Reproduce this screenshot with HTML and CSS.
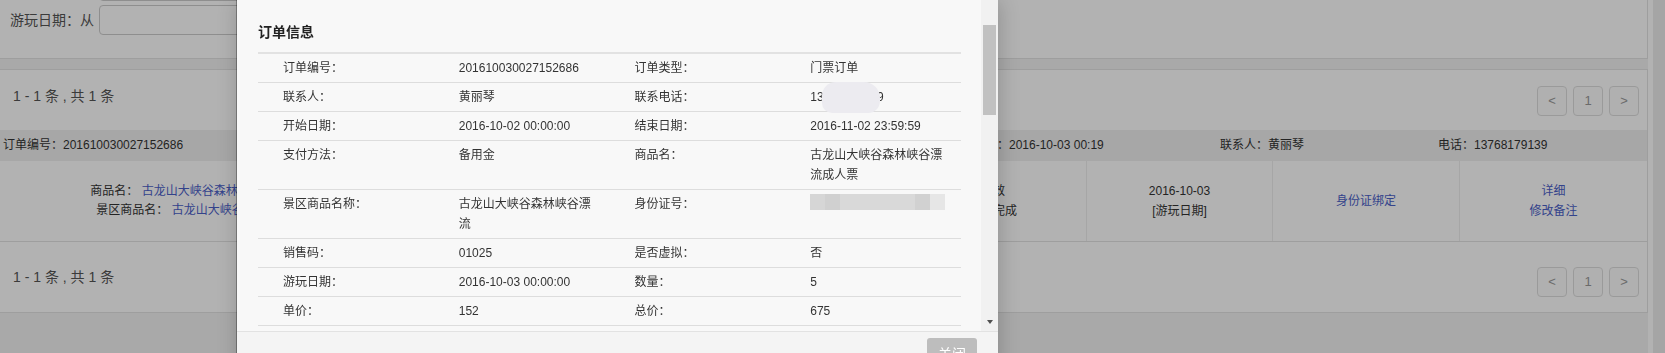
FILE: index.html
```html
<!DOCTYPE html>
<html lang="zh-CN">
<head>
  <meta charset="UTF-8" />
  <meta name="viewport" content="width=device-width, initial-scale=1.0"/>
  <title>订单管理</title>
  <link rel="stylesheet" href="styles.css">
</head>
<body>
  <div class="page">
    <div class="main">
      <div class="panel search-panel">
        <div class="search-row">
          <label>下单日期：从</label>
          <input class="field" type="text">
        </div>
        <div class="search-row">
          <label>游玩日期：从</label>
          <input class="field" type="text">
        </div>
      </div>

      <div class="panel list-panel">
        <div class="pager">
          <span class="pager-count">1 - 1 条 , 共 1 条</span>
          <div class="pager-btns">
            <a class="pg-btn">&lt;</a>
            <a class="pg-btn">1</a>
            <a class="pg-btn">&gt;</a>
          </div>
        </div>

        <div class="order">
          <div class="order-head">
            <span>订单编号：201610030027152686</span>
            <span>下单时间：2016-10-03 00:19</span>
            <span>联系人：黄丽琴</span>
            <span>电话：13768179139</span>
          </div>
          <div class="order-body">
            <div class="cell cell-goods">
              <div>商品名： <a href="#">古龙山大峡谷森林峡谷漂流成人票</a></div>
              <div>景区商品名： <a href="#">古龙山大峡谷森林峡谷漂流</a></div>
            </div>
            <div class="cell">152.00<br>x 5</div>
            <div class="cell">675.00</div>
            <div class="cell">有效<br>交易完成</div>
            <div class="cell">2016-10-03<br>[游玩日期]</div>
            <div class="cell"><a href="#">身份证绑定</a></div>
            <div class="cell"><a href="#">详细</a><a href="#">修改备注</a></div>
          </div>
        </div>

        <div class="pager pager-bottom">
          <span class="pager-count">1 - 1 条 , 共 1 条</span>
          <div class="pager-btns">
            <a class="pg-btn">&lt;</a>
            <a class="pg-btn">1</a>
            <a class="pg-btn">&gt;</a>
          </div>
        </div>
      </div>
    </div>
    <div class="page-scroll"></div>
  </div>

  <div class="shade"></div>

  <div class="layer">
    <div class="layer-main">
      <div class="layer-content">
        <h3 class="info-title">订单信息</h3>
        <table class="info-table">
          <tr><td>订单编号：</td><td>201610030027152686</td><td>订单类型：</td><td>门票订单</td></tr>
          <tr><td>联系人：</td><td>黄丽琴</td><td>联系电话：</td><td><span class="masked">13768179139<i class="blot"></i></span></td></tr>
          <tr><td>开始日期：</td><td>2016-10-02 00:00:00</td><td>结束日期：</td><td>2016-11-02 23:59:59</td></tr>
          <tr><td>支付方法：</td><td>备用金</td><td>商品名：</td><td>古龙山大峡谷森林峡谷漂流成人票</td></tr>
          <tr><td>景区商品名称：</td><td>古龙山大峡谷森林峡谷漂流</td><td>身份证号：</td><td><span class="id-mask"></span></td></tr>
          <tr><td>销售码：</td><td>01025</td><td>是否虚拟：</td><td>否</td></tr>
          <tr><td>游玩日期：</td><td>2016-10-03 00:00:00</td><td>数量：</td><td>5</td></tr>
          <tr><td>单价：</td><td>152</td><td>总价：</td><td>675</td></tr>
          <tr><td>订单状态：</td><td>有效</td><td>支付状态：</td><td>已支付</td></tr>
        </table>
      </div>
      <div class="layer-scrollbar">
        <div class="thumb"></div>
        <div class="arrow-down"></div>
      </div>
    </div>
    <div class="layer-foot">
      <a class="btn-close">关闭</a>
    </div>
  </div>
</body>
</html>
```

FILE: styles.css
```css
* {
  box-sizing: border-box;
}

body {
  margin: 0;
  font-family: "Liberation Sans", "Noto Sans CJK JP", "Noto Sans CJK SC", sans-serif;
  font-size: 12px;
  color: #333;
  background: #fff;
  overflow: hidden;
}

a {
  color: #4a60c8;
  text-decoration: none;
}

.page {
  display: flex;
  min-height: 100vh;
}

.main {
  width: 1648px;
  background: #f3f3f3;
}

.page-scroll {
  width: 12px;
  margin-left: 5px;
  background: #ededed;
}

.panel {
  background: #fff;
  border: 1px solid #e3e3e3;
  border-left: 0;
}

/* search form */
.search-panel {
  margin-top: -30px;
  padding-bottom: 23px;
}

.search-row {
  display: flex;
  align-items: center;
  gap: 5px;
  height: 30px;
  padding-left: 10px;
}

.search-row + .search-row {
  margin-top: 4px;
}

.search-row label {
  width: 84px;
  font-size: 14px;
  line-height: 30px;
  color: #555;
  white-space: nowrap;
}

.field {
  width: 220px;
  height: 30px;
  border: 1px solid #ccc;
  border-radius: 4px;
  background: #fff;
}

/* list */
.list-panel {
  margin-top: 10px;
}

.pager {
  display: flex;
  justify-content: space-between;
  align-items: flex-start;
  height: 60px;
  padding: 16px 8px 0 13px;
}

.pager-bottom {
  height: 70px;
  padding-top: 25px;
}

.pager-count {
  font-size: 14px;
  line-height: 20px;
  color: #555;
}

.pager-btns {
  display: flex;
  gap: 6px;
}

.pg-btn {
  width: 30px;
  height: 30px;
  border: 1px solid #ddd;
  border-radius: 4px;
  background: #fcfcfc;
  line-height: 28px;
  text-align: center;
  font-size: 13px;
  color: #999;
}

.order-head {
  display: grid;
  grid-template-columns: 946px 271px 218px auto;
  height: 31px;
  padding-left: 3px;
  line-height: 31px;
  background: #f0f0f0;
  white-space: nowrap;
}

.order-body {
  display: grid;
  grid-template-columns: 412px 300px 187px 187px 186px 187px 188px;
  height: 81px;
  border-bottom: 1px solid #e3e3e3;
}

.cell {
  display: flex;
  flex-direction: column;
  justify-content: center;
  align-items: center;
  border-left: 1px solid #eee;
  line-height: 20px;
  text-align: center;
}

.cell-goods {
  border-left: 0;
  line-height: 19px;
}

/* dialog */
.shade {
  position: fixed;
  inset: 0;
  background: rgba(0, 0, 0, 0.3);
}

.layer {
  position: absolute;
  top: 0;
  left: 237px;
  width: 761px;
  background: #f8f8f8;
  box-shadow: -1px 0 0 rgba(0, 0, 0, 0.3), 1px 1px 20px rgba(0, 0, 0, 0.2);
}

.layer-main {
  display: flex;
  height: 331px;
}

.layer-content {
  flex: 1;
  padding: 22px 20px 0 21px;
  overflow: hidden;
}

.info-title {
  margin: 0 0 10px;
  font-size: 14px;
  line-height: 20px;
  font-weight: bold;
  color: #222;
}

.info-table {
  width: 100%;
  table-layout: fixed;
  border-collapse: collapse;
  border-top: 2px solid #e2e2e2;
}

.info-table td {
  padding: 4px 15px 4px 25px;
  line-height: 20px;
  border-bottom: 1px solid #ddd;
  vertical-align: top;
  color: #333;
}

.masked {
  position: relative;
}

.blot {
  position: absolute;
  left: 12px;
  top: -8px;
  width: 58px;
  height: 31px;
  border-radius: 14px 16px 12px 10px;
  background: #ecebf0;
}

.id-mask {
  display: inline-block;
  vertical-align: top;
  width: 135px;
  height: 16px;
  background: linear-gradient(90deg, #d6d6d6 0 15px, #d0d0d0 15px 30px, #d9d9d9 30px 105px, #d1d1d1 105px 120px, #e6e6e6 120px);
}

.layer-scrollbar {
  display: flex;
  flex-direction: column;
  align-items: center;
  width: 17px;
  background: #f1f1f1;
}

.thumb {
  width: 13px;
  height: 90px;
  margin-top: 25px;
  background: #c1c1c1;
}

.arrow-down {
  margin-top: auto;
  margin-bottom: 7px;
  width: 0;
  height: 0;
  border-left: 3px solid transparent;
  border-right: 3px solid transparent;
  border-top: 4px solid #505050;
}

.layer-foot {
  height: 40px;
  padding: 6px 21px 0 0;
  border-top: 1px solid #e2e2e2;
  background: #f4f4f4;
  text-align: right;
}

.btn-close {
  display: inline-block;
  width: 50px;
  height: 32px;
  line-height: 32px;
  border-radius: 3px;
  background: #bdbdbd;
  color: #fff;
  font-size: 14px;
  text-align: center;
}
```
